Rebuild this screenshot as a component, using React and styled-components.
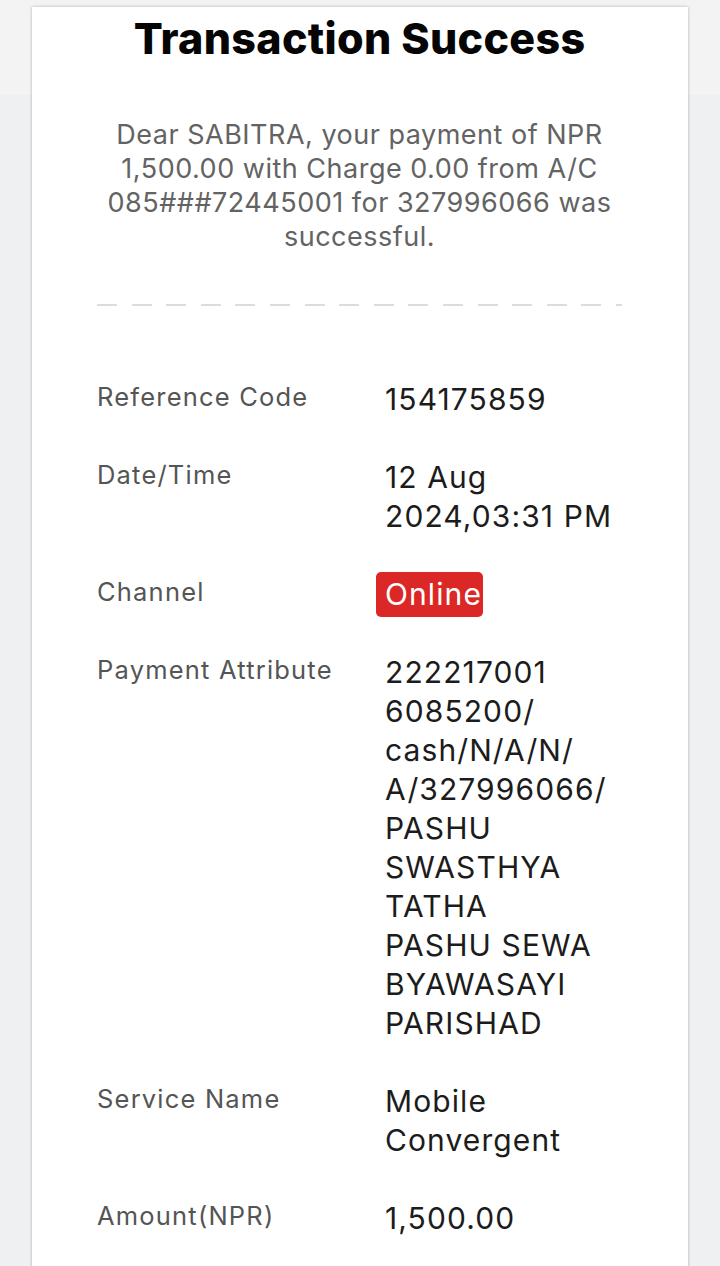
import React from "react";
import styled, { createGlobalStyle } from "styled-components";

const GlobalStyle = createGlobalStyle`
  html, body {
    margin: 0;
    padding: 0;
  }
  body {
    background: linear-gradient(#f3f3f3 0, #f3f3f3 95px, #eff0f2 95px, #eff0f2 100%);
    min-height: 100vh;
    font-family: Inter, "Noto Sans", sans-serif;
    -webkit-font-smoothing: antialiased;
  }
`;

const Page = styled.div`
  padding: 7px 32px 0;
`;

const Card = styled.div`
  background: #ffffff;
  box-shadow: 0 0 3px rgba(0, 0, 0, 0.28);
  padding: 5px 66px 60px 65px;
`;

const Title = styled.h1`
  margin: 0;
  text-align: center;
  font-family: Inter, sans-serif;
  font-weight: 800;
  font-size: 43px;
  line-height: 52px;
  letter-spacing: 0.3px;
  color: #050505;
`;

const Message = styled.p`
  margin: 54px 0 0;
  text-align: center;
  font-size: 27px;
  line-height: 34px;
  letter-spacing: 0.5px;
  color: #636363;
`;

const Dashes = styled.div`
  margin-top: 50px;
  height: 2px;
  background-image: repeating-linear-gradient(
    to right,
    #dcdcdc 0,
    #dcdcdc 20px,
    transparent 20px,
    transparent 34.6px
  );
`;

const Details = styled.dl`
  margin: 74px 0 0;
  display: flex;
  flex-direction: column;
  gap: 39px;
`;

const Row = styled.div`
  display: grid;
  grid-template-columns: 288px 1fr;
  align-items: start;
`;

const Label = styled.dt`
  margin: 0;
  font-size: 25.5px;
  line-height: 34px;
  letter-spacing: 1.2px;
  color: #555555;
`;

const Value = styled.dd`
  margin: 0;
  font-size: 30px;
  line-height: 39px;
  letter-spacing: 1.1px;
  color: #1c1c1c;
  white-space: pre-line;
`;

const Badge = styled.span`
  margin-left: -9px;
  padding: 4px 1px 5px 9px;
  border-radius: 5px;
  background: ${(p) => p.$tone};
  color: #ffffff;
`;

const rows = [
  { label: "Reference Code", value: "154175859" },
  { label: "Date/Time", value: "12 Aug\n2024,03:31 PM" },
  { label: "Channel", badge: "Online" },
  {
    label: "Payment Attribute",
    value:
      "222217001\n6085200/\ncash/N/A/N/\nA/327996066/\nPASHU\nSWASTHYA\nTATHA\nPASHU SEWA\nBYAWASAYI\nPARISHAD",
  },
  { label: "Service Name", value: "Mobile\nConvergent" },
  { label: "Amount(NPR)", value: "1,500.00" },
];

export default function App() {
  return (
    <>
      <GlobalStyle />
      <Page>
        <Card>
          <Title>Transaction Success</Title>
          <Message>
            Dear SABITRA, your payment of NPR 1,500.00 with Charge 0.00 from A/C
            085###72445001 for 327996066 was successful.
          </Message>
          <Dashes />
          <Details>
            {rows.map((r) => (
              <Row key={r.label}>
                <Label>{r.label}</Label>
                <Value>
                  {r.badge ? <Badge $tone="#dc2727">{r.badge}</Badge> : r.value}
                </Value>
              </Row>
            ))}
          </Details>
        </Card>
      </Page>
    </>
  );
}
